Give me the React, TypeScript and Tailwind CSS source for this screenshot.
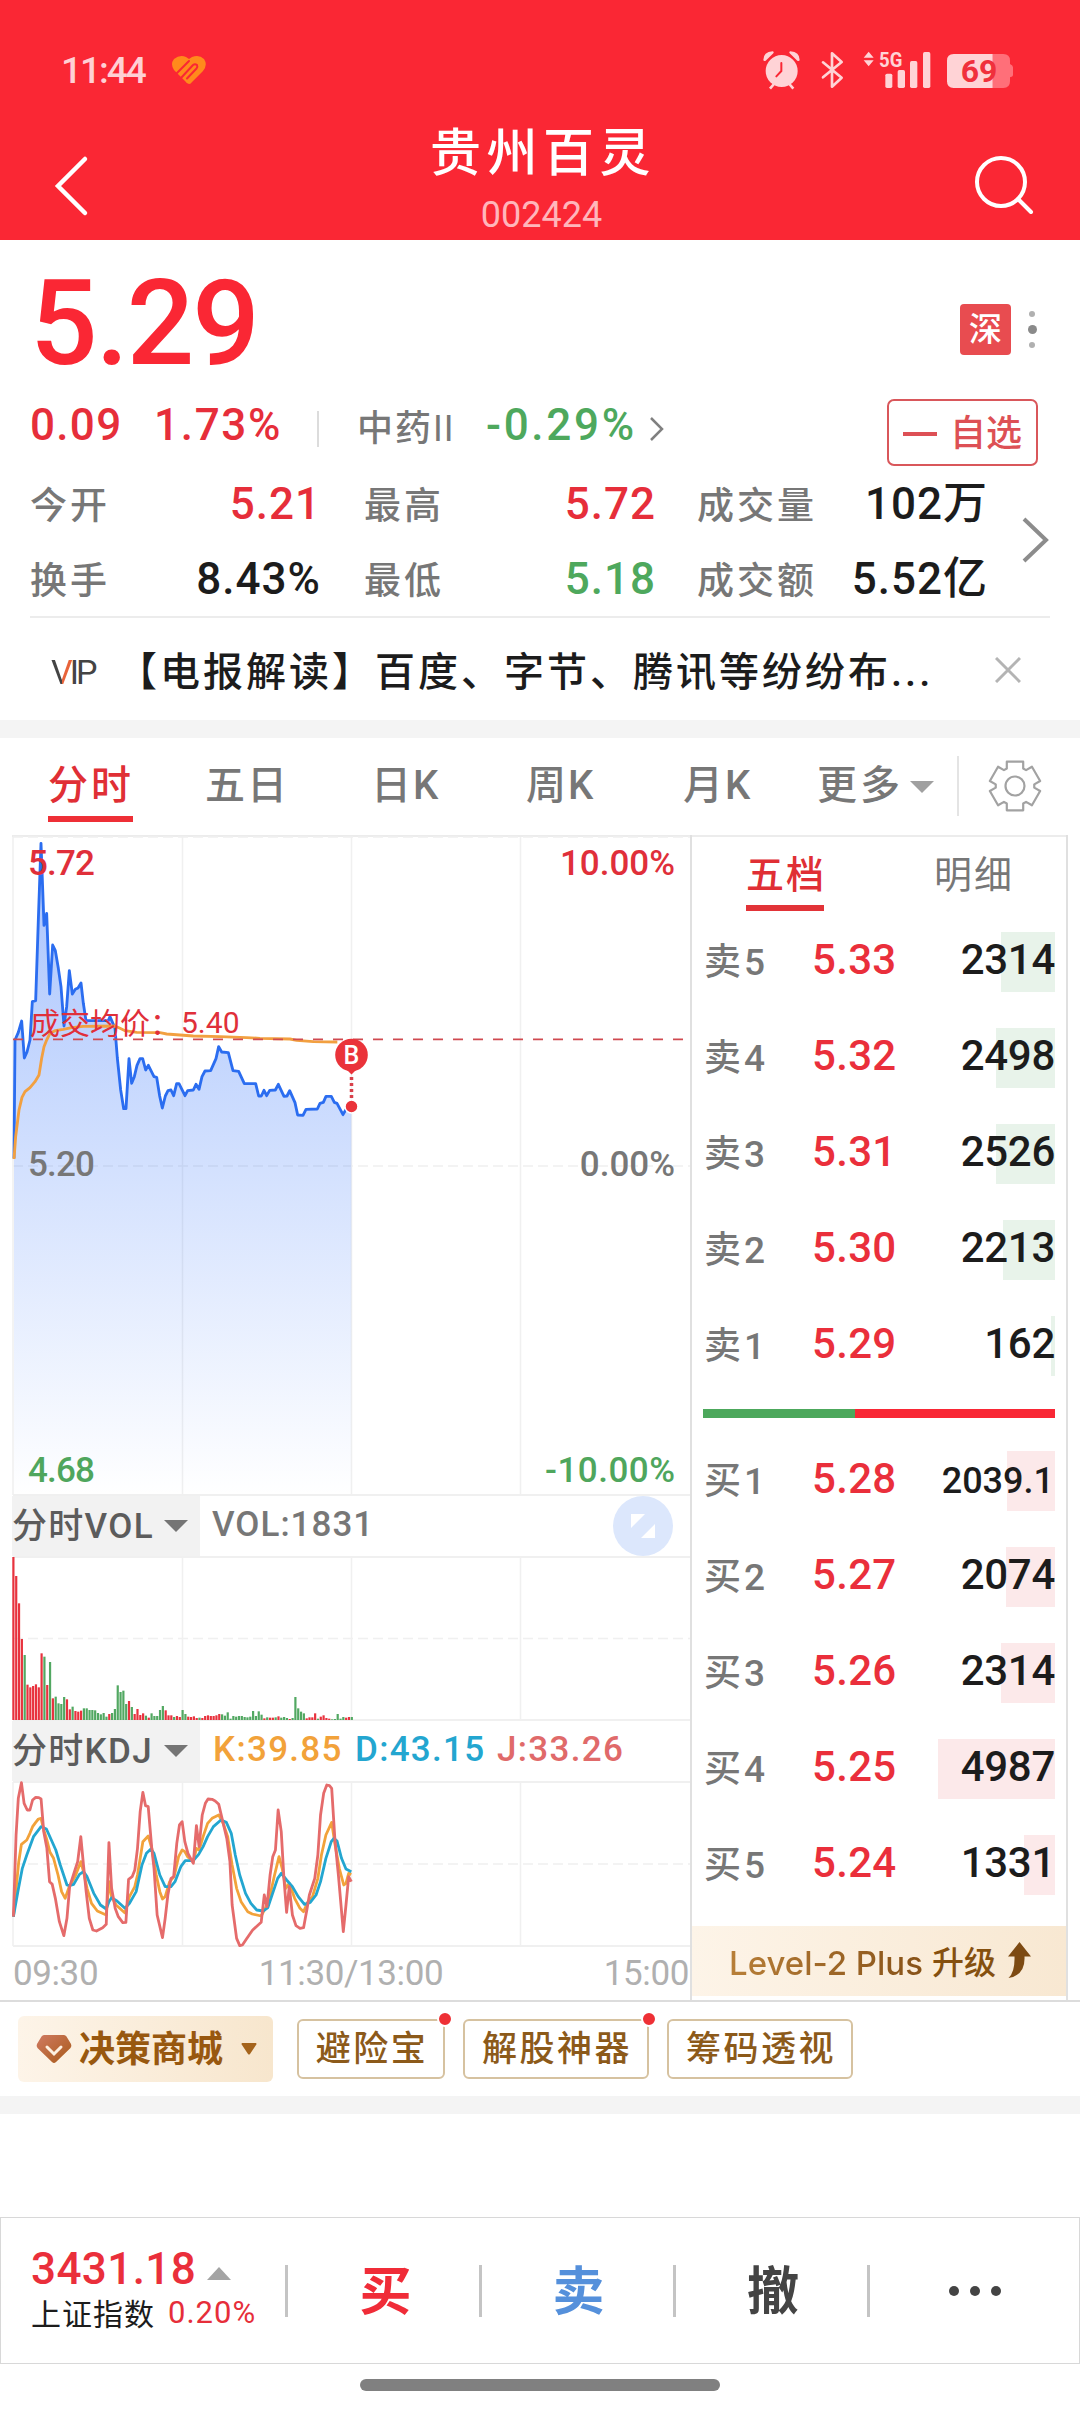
interface Level {
  label: string;
  price: string;
  amount: string;
  bar: number;
  small?: boolean;
}

const sells: Level[] = [
  { label: '卖5', price: '5.33', amount: '2314', bar: 54 },
  { label: '卖4', price: '5.32', amount: '2498', bar: 59 },
  { label: '卖3', price: '5.31', amount: '2526', bar: 59 },
  { label: '卖2', price: '5.30', amount: '2213', bar: 52 },
  { label: '卖1', price: '5.29', amount: '162', bar: 4 },
];

const buys: Level[] = [
  { label: '买1', price: '5.28', amount: '2039.1', bar: 48, small: true },
  { label: '买2', price: '5.27', amount: '2074', bar: 49 },
  { label: '买3', price: '5.26', amount: '2314', bar: 54 },
  { label: '买4', price: '5.25', amount: '4987', bar: 117 },
  { label: '买5', price: '5.24', amount: '1331', bar: 31 },
];

// one bar per minute, r = up, g = down
const volumes =
  '489r 432r 350r 243r 195g 106r 98r 102r 107r 98r 200r 190g 105r 174g 65r 70g 50g 48g 69g 62r 32r 40g 27r 25r 28r 35g 35g 30g 30g 29g 21g 17g 21g 10g 18r 21g 33g 104g 84g 88g 48g 57r 39g 18r 33r 15r 20r 13g 7r 20g 12g 12g 30g 42g 29r 14r 14r 9g 12r 9r 30g 18g 10r 9r 11r 6r 7g 6r 12r 14r 12r 12r 14r 18r 17g 13g 23g 4g 12g 10g 12g 12g 9g 8g 10g 27g 12g 26g 16g 5r 8g 7r 7r 8g 11r 7g 9g 6g 3r 6g 69g 35g 25g 20g 5r 8r 8r 20r 4g 10r 14r 6r 4r 2g 3g 18g 4g 9g 7r 9r 9g'
    .split(' ')
    .map((v) => ({ size: parseInt(v, 10) / 3, up: v.endsWith('r') }));

const priceLine =
  '42,1015 45,660 55,637 65,603 73,714 81,696 90,660 97,545 107,542 115,300 123,70 132,316 140,280 149,522 158,375 166,392 175,445 183,500 192,618 200,560 208,452 217,522 226,508 234,504 243,489 250,550 258,602 325,602 330,590 345,625 352,714 362,810 371,866 378,866 387,716 395,790 403,770 411,736 420,716 428,716 437,750 445,736 462,770 470,772 479,828 487,864 496,828 504,812 513,810 521,827 530,791 537,791 555,827 563,812 580,810 588,793 597,808 606,770 615,753 632,752 648,716 656,680 665,696 685,698 699,752 716,754 733,791 767,791 776,828 784,828 792,811 800,827 809,811 826,810 835,793 852,829 861,828 869,812 885,848 893,885 909,886 918,868 952,867 960,850 970,847 978,829 994,829 1003,847 1011,850 1029,884 1038,868 1054,868';

const averageLine =
  '42,1017 47,950 57,870 66,832 75,815 90,803 105,785 117,765 125,715 132,680 140,660 150,640 165,632 190,628 215,623 250,619 345,618 360,625 375,632 395,635 410,637 480,638 500,642 580,648 660,650 740,653 780,655 870,657 890,661 940,665 1012,666';

const jLine =
  '30,605 36,360 41,250 48,203 54,265 61,285 67,285 73,255 80,247 87,248 92,252 98,350 105,400 111,500 117,508 124,550 133,620 143,662 150,610 156,515 168,465 174,440 181,365 187,450 193,530 200,610 208,645 216,648 230,638 238,628 244,383 250,520 258,580 265,605 275,623 282,622 288,493 296,485 302,465 308,400 314,290 320,232 326,272 332,275 340,400 345,460 352,600 364,668 370,610 376,540 383,490 389,485 396,385 402,330 408,320 414,380 421,415 433,445 440,332 446,395 453,300 460,265 466,252 475,253 482,258 490,268 500,325 508,370 515,440 520,570 530,670 537,692 543,690 552,672 566,645 585,622 592,540 598,575 605,480 611,425 617,405 623,285 630,350 636,490 642,592 648,515 655,600 663,632 672,640 680,638 688,580 693,540 705,490 712,420 718,300 725,235 732,210 738,212 743,220 750,370 758,480 769,650 775,570 781,485 787,500';

const kLine =
  '30,605 42,440 48,388 60,375 67,355 73,335 80,322 86,312 92,310 98,345 105,375 112,412 120,430 130,480 138,530 146,550 155,515 168,485 181,440 187,470 195,520 205,565 218,588 238,600 244,500 250,545 260,570 280,594 290,545 302,515 308,480 320,380 332,363 340,400 350,480 358,530 364,552 370,545 380,500 390,485 400,425 408,405 414,410 420,425 433,440 440,400 446,405 455,365 465,325 475,310 490,300 500,325 510,365 520,450 530,520 540,560 555,590 565,597 585,603 595,578 605,540 615,480 625,425 632,460 640,520 648,505 660,550 672,580 680,590 690,560 700,545 712,490 720,420 730,360 743,322 750,385 760,460 770,510 775,505 781,475 787,478';

const dLine =
  '30,605 40,530 50,460 60,420 75,365 92,335 104,342 115,375 125,405 135,450 150,510 155,512 165,508 178,478 187,470 195,485 210,535 225,570 238,582 244,560 250,548 262,558 280,580 290,565 305,530 318,450 328,415 338,402 345,415 358,480 370,515 383,515 392,500 405,455 415,437 433,437 445,418 455,395 465,365 478,335 495,315 507,322 518,355 527,420 537,480 550,535 562,565 575,585 590,588 600,578 612,530 622,490 630,475 642,495 655,515 668,545 682,568 695,562 708,540 718,500 730,430 742,380 748,370 755,378 765,430 775,462 787,470';

const gearPoints = [0, 60, 120, 180, 240, 300]
  .flatMap((deg) => {
    const a = (deg * Math.PI) / 180;
    return [
      [-8.2, -17.5],
      [-8.2, -24.3],
      [8.2, -24.3],
      [8.2, -17.5],
    ].map(([x, y]) => `${x * Math.cos(a) - y * Math.sin(a)},${x * Math.sin(a) + y * Math.cos(a)}`);
  })
  .join(' ');

function StatusBar() {
  return (
    <div className="flex h-[104px] items-start justify-between pl-[61px] pr-[50px] pt-[40px]">
      <div className="flex h-[60px] items-center">
        <span className="w-[110px] text-[37px] leading-none tracking-[-2px] text-[#ffd0d4]">11:44</span>
        <svg width="36" height="32" viewBox="0 0 36 32">
          <path d="M18 30 Q16 30 14 27 L3 16 Q-1 10 3 5 Q9 0 15 3 L18 5 L21 3 Q28 0 33 5 Q37 11 32 17 L21 28 Q20 30 18 30Z" fill="#ff8a1c" />
          <path d="M6 19 L18 7 M10 24 L22 11 Q24 9.500 26 11 Q27 13 25.500 14.500 L16 24.500" fill="none" stroke="#fa2734" strokeWidth="2" strokeLinecap="round" />
        </svg>
      </div>
      <svg width="280" height="60" viewBox="0 0 840 180" fill="#ffd3d6">
        <circle cx="95" cy="93" r="48" />
        <path d="M40 60 Q40 36 68 34 Q74 36 70 40 L47 62 Q41 64 40 60Z M149 60 Q149 36 121 34 Q115 36 119 40 L142 62 Q148 64 149 60Z" />
        <path d="M72 132 L60 146 M118 132 L130 146" stroke="#ffd3d6" strokeWidth="8" />
        <path d="M94 69 V93 L79 109" fill="none" stroke="#fa2734" strokeWidth="6" strokeLinecap="round" />
        <path d="M219 67 L275 113 L246 140 V40 L275 66 L219 112" fill="none" stroke="#ffd3d6" strokeWidth="8" strokeLinejoin="round" strokeLinecap="round" />
        <path d="M341 53 L356 35 L371 53Z M341 61 L356 79 L371 61Z" />
        <text x="387" y="80" fontSize="62" fontWeight="700" textLength="70" lengthAdjust="spacingAndGlyphs">5G</text>
        <rect x="406" y="101" width="21" height="43" rx="5" />
        <rect x="443" y="90" width="22" height="54" rx="5" />
        <rect x="480" y="63" width="22" height="81" rx="5" />
        <rect x="519" y="36" width="22" height="108" rx="5" />
        <path d="M728 42 H760 Q780 42 780 62 V72 Q789 76 789 82 V106 Q789 110 780 112 V124 Q780 144 760 144 H728Z" fill="#ff6f79" />
        <path d="M728 42 V144 H611 Q591 144 591 124 V62 Q591 42 611 42Z" />
        <text x="632" y="127" fontSize="92" fontWeight="700" fill="#f0303c" textLength="110" lengthAdjust="spacingAndGlyphs">69</text>
      </svg>
    </div>
  );
}

function TitleBar() {
  return (
    <div className="flex h-[136px] justify-between pl-[52px] pr-[44px]">
      <svg width="62" height="136" viewBox="0 0 62 136" fill="none" stroke="#fff" strokeWidth="4.500" strokeLinecap="round">
        <path d="M33 55 L6 82 L33 109" />
      </svg>
      <div className="flex flex-col items-center pr-[5px]">
        <div className="mt-[22px] pl-[3px] text-[51px] leading-[56px] tracking-[5.500px] text-white">贵州百灵</div>
        <div className="mt-[15px] text-[36px] font-normal leading-[36px] text-[#ffb6bb]">002424</div>
      </div>
      <svg width="62" height="136" viewBox="0 0 62 136" fill="none" stroke="#fff" strokeWidth="4" strokeLinecap="round">
        <circle cx="27" cy="78" r="24" />
        <path d="M44 95 L57 108" />
      </svg>
    </div>
  );
}

function QuotePanel() {
  return (
    <section className="h-[480px] px-[30px]">
      <div className="flex h-[142px] items-center justify-between pt-[22px]">
        <span className="mt-[2px] text-[119px] leading-none tracking-[-2px] text-[#fa2734]">5.29</span>
        <div className="mt-[14px] flex items-center gap-[17px] pr-[14px]">
          <div className="flex h-[51px] w-[51px] items-center justify-center rounded-[4px] bg-[#e84c50] text-[33px] leading-none text-white">深</div>
          <div className="flex w-[8px] flex-col items-center gap-[8px]">
            <i className="h-[6px] w-[6px] rounded-full bg-[#b0b0b0]" />
            <i className="h-[9px] w-[9px] rounded-full bg-[#8a8a8a]" />
            <i className="h-[6px] w-[6px] rounded-full bg-[#b0b0b0]" />
          </div>
        </div>
      </div>

      <div className="flex h-[84px] items-center text-[44px] leading-none">
        <span className="w-[124px] pt-[1px] tracking-[1.300px] text-[#e62e3a]">0.09</span>
        <span className="w-[163px] pt-[1px] tracking-[1.700px] text-[#e62e3a]">1.73%</span>
        <i className="mt-[10px] h-[36px] w-[2px] bg-[#dcdcdc]" />
        <span className="ml-[38px] mt-[10px] w-[129px] text-[36px] tracking-[2px] text-[#777]">中药<span className="font-normal tracking-[1px]">II</span></span>
        <span className="w-[163px] pt-[1px] tracking-[2.700px] text-[#4ea85d]">-0.29%</span>
        <svg className="mt-[9px]" width="16" height="28" viewBox="0 0 16 28" fill="none" stroke="#808080" strokeWidth="2.500">
          <path d="M2 3 L13 14 L2 25" />
        </svg>
        <div className="ml-[222px] mt-[16px] flex h-[67px] w-[151px] shrink-0 items-center justify-center gap-[13px] rounded-[7px] border-2 border-[#d9575b] pt-[3px] text-[36px] text-[#dd5055]">
          <i className="h-[4px] w-[34px] bg-[#dd5055]" />
          自选
        </div>
      </div>

      <div className="flex h-[150px]">
        <div className="grid grow grid-cols-[291px_43px_292px_41px_291px] content-start text-[44px] leading-none">
          <Stat label="今开" value="5.21" color="text-[#e62e3a]" />
          <i />
          <Stat label="最高" value="5.72" color="text-[#e62e3a]" />
          <i />
          <Stat label="成交量" value="102万" color="text-[#1c1c1c]" />
          <Stat label="换手" value="8.43%" color="text-[#1c1c1c]" />
          <i />
          <Stat label="最低" value="5.18" color="text-[#4ea85d]" />
          <i />
          <Stat label="成交额" value="5.52亿" color="text-[#1c1c1c]" />
        </div>
        <svg width="28" height="120" viewBox="0 0 28 120" fill="none" stroke="#8c8c8c" strokeWidth="4">
          <path d="M2 53 L24 74 L2 95" />
        </svg>
      </div>

      <div className="flex h-[104px] items-center border-t-2 border-[#ececec] pt-[8px] leading-none">
        <div className="mb-[3px] ml-[21px] w-[46px] whitespace-nowrap text-[34px] font-normal leading-[44px] tracking-[-3px] text-[#444]">
          <span className="-mr-[3px] bg-gradient-to-r from-[#444] from-50% to-[#e8633a] to-50% bg-clip-text pr-[3px] text-transparent">V</span>IP
        </div>
        <span className="ml-[20px] w-[880px] whitespace-nowrap text-[40px] tracking-[3px] text-[#1c1c1c]">【电报解读】百度、字节、腾讯等纷纷布...</span>
        <svg className="-ml-[2px] mb-[7px]" width="26" height="26" viewBox="0 0 26 26" stroke="#b4b4b4" strokeWidth="3">
          <path d="M1 1 L25 25 M25 1 L1 25" />
        </svg>
      </div>
    </section>
  );
}

function Stat({ label, value, color }: { label: string; value: string; color: string }) {
  return (
    <div className="flex h-[75px] items-center justify-between">
      <span className="mt-[5px] whitespace-nowrap text-[37px] tracking-[3px] text-[#777]">{label}</span>
      <span className={`whitespace-nowrap pt-[1px] tracking-[1px] ${color}`}>{value}</span>
    </div>
  );
}

function PeriodTabs() {
  return (
    <nav className="flex h-[97px] items-start pl-[48px] text-[40px] leading-none text-[#777]">
      <div className="w-[157px]">
        <div className="flex h-[78px] items-center pt-[18px] tracking-[3px] text-[#e02f35]">分时</div>
        <div className="h-[6px] w-[85px] bg-[#ee2f36]" />
      </div>
      <div className="flex h-[96px] w-[166px] items-center tracking-[2px]">五日</div>
      <div className="flex h-[96px] w-[155px] items-center tracking-[2px]">日K</div>
      <div className="flex h-[96px] w-[157px] items-center tracking-[2px]">周K</div>
      <div className="flex h-[96px] w-[134px] items-center tracking-[2px]">月K</div>
      <div className="flex h-[96px] w-[93px] items-center tracking-[3px]">更多</div>
      <svg width="24" height="96" viewBox="0 0 24 96"><path d="M0 43 H24 L12 55Z" fill="#a0a0a0" /></svg>
      <i className="ml-[23px] mt-[18px] h-[60px] w-[2px] bg-[#e4e4e4]" />
      <svg className="ml-[29px]" width="54" height="96" viewBox="-27 -48 54 96" fill="none" stroke="#a2a2a2" strokeWidth="2.200" strokeLinejoin="round">
        <polygon points={gearPoints} />
        <circle r="9.500" />
      </svg>
    </nav>
  );
}

function PriceChart() {
  return (
    <svg width="678" height="661" viewBox="12 835 678 661" className="block">
      <defs>
        <linearGradient id="fade" gradientUnits="userSpaceOnUse" x1="0" y1="843" x2="0" y2="1495">
          <stop offset="0" stopColor="#2468fa" stopOpacity="0.4" />
          <stop offset="1" stopColor="#2468fa" stopOpacity="0" />
        </linearGradient>
        <clipPath id="area">
          <polygon points={`${priceLine} 1054,2025 42,2025`} transform="translate(0 820) scale(0.33333)" />
        </clipPath>
      </defs>
      <g stroke="#f0f0f0" strokeWidth="1.500">
        <path d="M13 837V1495 M182.500 837V1495 M351.500 837V1495 M520.500 837V1495" />
        <path d="M13 837H690 M13 1166H690" strokeDasharray="10 5" />
        <path d="M13 1495H690" strokeWidth="2" />
      </g>
      <rect x="12" y="835" width="341" height="661" fill="url(#fade)" clipPath="url(#area)" />
      <g transform="translate(0 820) scale(0.33333)" fill="none" strokeLinejoin="round">
        <polyline points={priceLine} stroke="#2b6df0" strokeWidth="8.500" />
        <polyline points={averageLine} stroke="#f2a040" strokeWidth="8.500" />
      </g>
      <path d="M13 1039.300H684" stroke="#d04a50" strokeWidth="1.800" strokeDasharray="10 10" />
      <g fontSize="35">
        <g fill="#e02f3a">
          <text x="28" y="875" textLength="67">5.72</text>
          <text x="675" y="875" textAnchor="end">10.00%</text>
          <text x="30" y="1034" fontSize="30" fontWeight="400">成交均价：</text>
          <text x="181" y="1033" fontSize="30" fontWeight="400">5.40</text>
        </g>
        <g fill="#777">
          <text x="28" y="1176" textLength="67">5.20</text>
          <text x="675" y="1176" textAnchor="end">0.00%</text>
        </g>
        <g fill="#4fa65d">
          <text x="28" y="1482" textLength="67">4.68</text>
          <text x="675" y="1482" textAnchor="end" textLength="130">-10.00%</text>
        </g>
      </g>
      <g fill="#ea333a">
        <circle cx="351.500" cy="1055" r="16.300" />
        <path d="M344 1067 L351.500 1074.500 L359 1067Z" />
        <path d="M351.500 1077V1100" stroke="#d8404a" strokeWidth="3.500" strokeDasharray="3 3" />
        <circle cx="351.500" cy="1106.500" r="6.500" stroke="#fff" strokeWidth="1.500" />
        <text x="351.500" y="1063.500" fontSize="25" fill="#fff" textAnchor="middle">B</text>
      </g>
    </svg>
  );
}

function IndicatorPicker({ name }: { name: string }) {
  return (
    <div className="flex h-full w-[188px] shrink-0 items-center bg-[#f2f2f2] text-[35px] leading-none text-[#5c5c5c]">
      <span className="w-[152px] whitespace-nowrap tracking-[1.300px]">{name}</span>
      <svg width="24" height="12" viewBox="0 0 24 12"><path d="M0 0H24L12 12Z" fill="#757575" /></svg>
    </div>
  );
}

function VolumeChart() {
  return (
    <svg width="678" height="165" viewBox="12 1556 678 165" className="block">
      <g stroke="#f0f0f0" strokeWidth="1.500">
        <path d="M13 1557V1720 M182.500 1557V1720 M351.500 1557V1720 M520.500 1557V1720" />
        <path d="M13 1557H690 M13 1720H690" strokeWidth="2" />
        <path d="M13 1638.500H690" strokeDasharray="10 5" />
      </g>
      {volumes.map((v, i) => (
        <rect key={i} x={12.3 + i * 2.82} y={1720 - v.size} width="2.200" height={v.size} fill={v.up ? '#e8323e' : '#52a862'} />
      ))}
    </svg>
  );
}

function KdjChart() {
  return (
    <svg width="678" height="166" viewBox="12 1781 678 166" className="block">
      <g stroke="#f0f0f0" strokeWidth="1.500">
        <path d="M13 1782V1946 M182.500 1782V1946 M351.500 1782V1946 M520.500 1782V1946" />
        <path d="M13 1782H690 M13 1946H690" strokeWidth="2" />
        <path d="M13 1864H690" strokeDasharray="10 5" />
      </g>
      <g transform="translate(0 1715) scale(0.44643 0.33333)" fill="none" strokeLinejoin="round" strokeWidth="2.800">
        <polyline points={kLine} stroke="#f2a23a" vectorEffect="non-scaling-stroke" />
        <polyline points={dLine} stroke="#23a6d0" vectorEffect="non-scaling-stroke" />
        <polyline points={jLine} stroke="#e56b6b" vectorEffect="non-scaling-stroke" />
      </g>
    </svg>
  );
}

function Charts() {
  return (
    <div className="w-[678px]">
      <PriceChart />
      <div className="flex h-[60px] items-center">
        <IndicatorPicker name="分时VOL" />
        <span className="ml-[12px] grow pb-[3px] text-[35px] leading-none tracking-[1px] text-[#777]">VOL:1831</span>
        <svg className="mr-[17px]" width="60" height="60" viewBox="0 0 60 60">
          <circle cx="30" cy="30" r="30" fill="#dce7fc" />
          <path d="M18 18H32L18 32Z M42 28V42H28Z" fill="#fff" />
        </svg>
      </div>
      <VolumeChart />
      <div className="flex h-[60px] items-center">
        <IndicatorPicker name="分时KDJ" />
        <div className="ml-[13px] flex pb-[3px] text-[35px] leading-none tracking-[1.300px]">
          <span className="w-[142px] text-[#f2a23a]">K:39.85</span>
          <span className="w-[142px] text-[#23a6d0]">D:43.15</span>
          <span className="text-[#e06a6a]">J:33.26</span>
        </div>
      </div>
      <KdjChart />
      <div className="flex h-[53px] items-center justify-between pl-[1px] pr-[1px] text-[35px] font-normal leading-none tracking-[-0.400px] text-[#b0b0b0]">
        <span>09:30</span>
        <span>11:30/13:00</span>
        <span>15:00</span>
      </div>
    </div>
  );
}

function LevelRow({ level, tint }: { level: Level; tint: string }) {
  return (
    <div className="relative flex h-[60px] items-center leading-none">
      <div className={`absolute right-0 top-0 h-full ${tint}`} style={{ width: level.bar }} />
      <span className="relative w-[109px] pl-[1px] text-[37px] tracking-[3px] text-[#777]">{level.label}</span>
      <span className="relative grow pb-[4px] text-[42px] tracking-[0.300px] text-[#ea2f3b]">{level.price}</span>
      <span className={`relative text-[#1c1c1c] ${level.small ? 'pr-[1px] text-[36px]' : 'pb-[4px] text-[42px] tracking-[-0.300px]'}`}>{level.amount}</span>
    </div>
  );
}

function OrderBook() {
  return (
    <div className="flex h-[1165px] w-[378px] flex-col border-x-2 border-[#e0e0e0]">
      <div className="flex h-[97px] items-start pl-[54px] text-[38px] leading-none tracking-[2px]">
        <div className="w-[188px]">
          <div className="flex h-[70px] items-center pt-[10px] text-[#e02f35]">五档</div>
          <div className="h-[6px] w-[78px] bg-[#e23338]" />
        </div>
        <div className="flex h-[70px] items-center pt-[10px] font-normal text-[#777]">明细</div>
      </div>
      <div className="flex flex-col gap-[36px] px-[11px]">
        {sells.map((level) => (
          <LevelRow key={level.label} level={level} tint="bg-[#e8f3ea]" />
        ))}
      </div>
      <div className="mx-[11px] my-[33px] flex h-[9px]">
        <div className="w-[152px] bg-[#4ca85c]" />
        <div className="grow bg-[#f92735]" />
      </div>
      <div className="flex flex-col gap-[36px] px-[11px]">
        {buys.map((level) => (
          <LevelRow key={level.label} level={level} tint="bg-[#fce9ea]" />
        ))}
      </div>
      <div className="mt-[31px] flex h-[70px] items-center bg-gradient-to-r from-[#fdf4e8] to-[#f8e8d2] pl-[37px] pt-[4px] font-['Inter','Noto_Sans_CJK_SC',sans-serif] text-[33px] leading-none text-[#85500f]">
        <span className="w-[203px] whitespace-nowrap bg-gradient-to-r from-[#b87f38] to-[#855016] bg-clip-text text-transparent">Level-2 Plus</span>
        <span className="text-[32px]">升级</span>
        <svg className="mb-[6px] ml-[11px]" width="24" height="37" viewBox="0 0 24 37" fill="#7d4a12">
          <path d="M12.500 0 L24 14.500 H17.500 Q18.500 33 1.500 36 Q8 30 7.500 14.500 H1Z" />
        </svg>
      </div>
    </div>
  );
}

function ToolButton({ label, width, dot }: { label: string; width: string; dot?: boolean }) {
  return (
    <div className={`relative flex h-[60px] items-center justify-center rounded-[6px] border-2 border-[#d6c2a0] pl-[2px] text-[35px] leading-none tracking-[2.500px] text-[#8c5a1a] ${width}`}>
      {label}
      {dot && <i className="absolute -right-[10px] -top-[10px] h-[16px] w-[16px] rounded-full border-2 border-white bg-[#ee3035]" />}
    </div>
  );
}

function Tools() {
  return (
    <div className="flex h-[96px] items-center border-t-2 border-[#dcdcdc] pl-[18px]">
      <div className="mr-[24px] flex h-[66px] w-[255px] items-center rounded-[6px] bg-gradient-to-r from-[#fdf4e8] to-[#f7e6cd] pl-[18px] leading-none">
        <svg width="36" height="30" viewBox="0 0 36 30">
          <defs>
            <linearGradient id="gem" x1="0" y1="0" x2="1" y2="1">
              <stop offset="0" stopColor="#d07a62" />
              <stop offset="1" stopColor="#a85a18" />
            </linearGradient>
          </defs>
          <path d="M8 1H28Q29.500 1 30.500 2.500L35 10Q36 12 34.500 14L20 28Q18 30 16 28L1.500 14Q0 12 1 10L5.500 2.500Q6.500 1 8 1Z" fill="url(#gem)" />
          <path d="M11 13L18 20L25 13" fill="none" stroke="#fdf0e0" strokeWidth="3" strokeLinecap="round" />
        </svg>
        <span className="ml-[7px] w-[162px] whitespace-nowrap pt-[1px] text-[36px] font-bold text-[#98580f]">决策商城</span>
        <svg width="16" height="12" viewBox="0 0 16 12"><path d="M1 0H15Q16 1 15 2L9 11Q8 12 7 11L1 2Q0 1 1 0Z" fill="#a5641c" /></svg>
      </div>
      <div className="flex gap-[18px]">
        <ToolButton label="避险宝" width="w-[148px]" dot />
        <ToolButton label="解股神器" width="w-[186px]" dot />
        <ToolButton label="筹码透视" width="w-[186px]" />
      </div>
    </div>
  );
}

function TradeBar() {
  const divider = <i className="h-[52px] w-[3px] bg-[#c4c4c4]" />;
  return (
    <footer className="flex h-[147px] items-center border border-[#d8d8d8] text-[52px] font-bold leading-none">
      <div className="w-[284px] pl-[30px] font-normal">
        <div className="-mt-[4px] flex items-center text-[44px] font-medium text-[#ea2f3b]">
          <span className="w-[176px] tracking-[0.400px]">3431.18</span>
          <svg className="mt-[8px]" width="24" height="13" viewBox="0 0 24 13"><path d="M0 13H24L12 0Z" fill="#a4a4a4" /></svg>
        </div>
        <div className="flex items-center pt-[4px] text-[30px]">
          <span className="w-[137px] whitespace-nowrap pt-[5px] tracking-[1px] text-[#1c1c1c]">上证指数</span>
          <span className="text-[31px] tracking-[1px] text-[#e62e3a]">0.20%</span>
        </div>
      </div>
      {divider}
      <span className="w-[191px] pl-[4px] pt-[5px] text-center text-[#f02c38]">买</span>
      {divider}
      <span className="w-[191px] pl-[2px] pt-[5px] text-center text-[#5590db]">卖</span>
      {divider}
      <span className="w-[191px] pl-[3px] pt-[5px] text-center text-[#444]">撤</span>
      {divider}
      <div className="ml-[79px] flex gap-[11px]">
        <i className="h-[10px] w-[10px] rounded-full bg-[#444]" />
        <i className="h-[10px] w-[10px] rounded-full bg-[#444]" />
        <i className="h-[10px] w-[10px] rounded-full bg-[#444]" />
      </div>
    </footer>
  );
}

export default function App() {
  return (
    <div className="flex h-[2412px] w-[1080px] flex-col overflow-hidden bg-white font-['Roboto','Noto_Sans_CJK_SC',sans-serif] font-medium">
      <header className="h-[240px] bg-[#fa2734]">
        <StatusBar />
        <TitleBar />
      </header>
      <QuotePanel />
      <div className="h-[18px] bg-[#f4f4f4]" />
      <PeriodTabs />
      <div className="flex h-[1165px] pl-[12px]">
        <div className="flex border-t-2 border-[#ececec]">
          <div className="-mt-[2px] flex">
            <Charts />
            <OrderBook />
          </div>
        </div>
      </div>
      <Tools />
      <div className="h-[18px] bg-[#f4f4f4]" />
      <div className="h-[103px]" />
      <TradeBar />
      <div className="mx-auto mt-[15px] h-[12px] w-[360px] rounded-full bg-[#808080]" />
    </div>
  );
}
